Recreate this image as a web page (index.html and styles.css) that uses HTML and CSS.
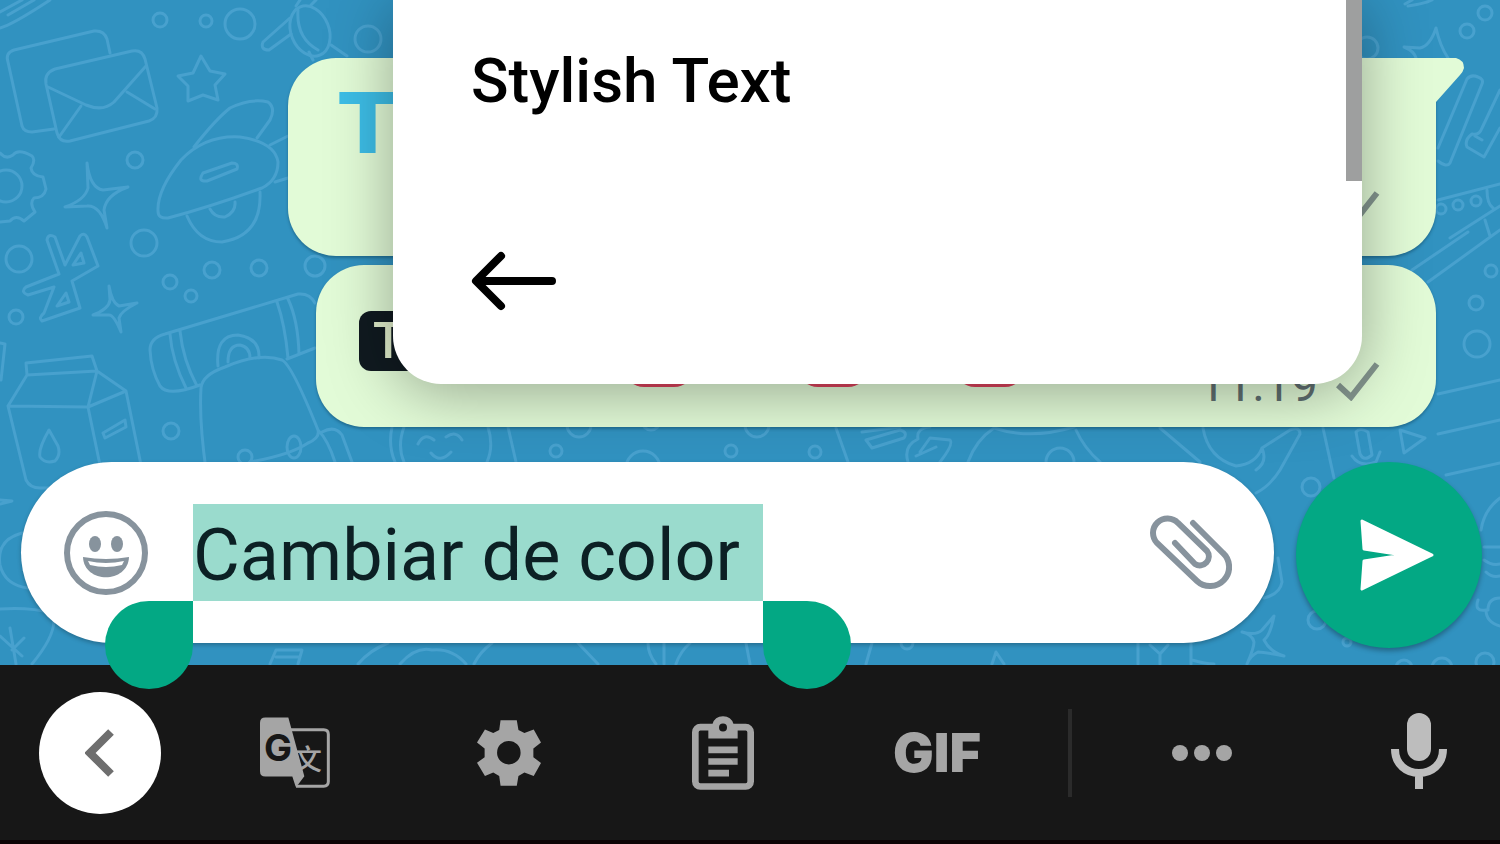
FILE: index.html
```html
<!DOCTYPE html>
<html lang="es">
<head>
<meta charset="utf-8">
<meta name="viewport" content="width=device-width, initial-scale=1">
<title>Stylish Text</title>
<link rel="stylesheet" href="styles.css">
</head>
<body>
<main class="chat">
  <svg class="wallpaper" viewBox="0 0 1500 665" preserveAspectRatio="xMinYMin slice" aria-hidden="true">
    <!-- envelopes, stars and dots -->
    <path d="M0 12L22 0M8 15L34 0M0 28Q12 25 50 0"/>
    <path d="M54 129L32 132Q24 132 22 126L8 62Q5 53 14 50L94 31Q104 30 107 39L110 53"/>
    <path d="M55 69L132 51Q142 49 145 59L157 108Q158 118 149 121L70 141Q60 143 57 133L46 84Q44 73 55 69Z"/>
    <path d="M48 87L86 105Q103 112 114 102L146 66M81 106L59 137M127 92L155 109"/>
    <path d="M201 56L210 71L225 74L215 85L218 100L203 95L188 101L188 86L178 76L193 73Z"/>
    <circle cx="160" cy="20" r="7"/><circle cx="206" cy="21" r="6"/><circle cx="240" cy="24" r="15"/><circle cx="368" cy="39" r="13"/><circle cx="135" cy="160" r="8"/>
    <path d="M87 163Q90 188 103 190L128 187Q106 195 104 210L107 228Q100 205 87 206L65 207Q85 200 88 188Z"/>
    <circle cx="6" cy="186" r="16"/>
    <path d="M0 153Q6 160 13 155Q18 148 32 156Q36 160 31 168Q32 176 43 177L46 189Q44 198 34 198Q29 203 35 212L24 221Q16 214 10 221L0 222"/>
    <!-- telescope -->
    <ellipse cx="310" cy="31" rx="19" ry="26" transform="rotate(-22 310 31)"/>
    <path d="M298 10Q296 38 318 50M290 18L263 42Q260 50 269 50L291 34M296 6L300 0M311 5L316 0M331 45L347 56M309 52L313 60"/>
    <!-- rocket -->
    <path d="M158 211Q157 190 181 160Q205 135 240 137Q275 142 278 162Q278 180 262 188Q210 207 168 218Q158 219 158 211Z"/>
    <path d="M194 147Q215 120 230 108Q250 98 268 102Q276 108 270 120L257 138M203 173L232 163Q239 163 237 169L207 181Q197 182 203 173ZM270 145L288 136M275 182L288 178"/>
    <path d="M187 216Q198 242 222 242Q262 236 260 192M210 209Q215 218 225 217Q236 212 235 202"/>
    <circle cx="19" cy="259" r="13"/><circle cx="144" cy="243" r="13"/><circle cx="170" cy="282" r="7"/><circle cx="212" cy="270" r="8"/><circle cx="259" cy="268" r="8"/><circle cx="191" cy="296" r="6"/><circle cx="315" cy="266" r="10"/><circle cx="16" cy="317" r="7"/><circle cx="171" cy="431" r="8"/>
    <path d="M47 240Q48 233 55 237L65 265L80 236Q84 232 87 237L98 266L72 281L80 308L42 321Q38 318 44 313L54 287L28 295Q20 292 26 287L59 274ZM73 265L81 253L84 263ZM57 306L66 293L69 302Z"/>
    <path d="M109 286Q112 303 119 306L137 303Q121 311 119 318L121 332Q114 315 109 315L93 315Q109 309 110 300Z"/>
    <!-- milk carton -->
    <path d="M97 371L27 375L26 363L92 356L97 371L88 407L8 406L27 375M8 406L26 480Q30 488 40 488H70M88 407L126 391L97 371M88 407L101 470M126 391L142 470M49 430Q38 449 40 457Q45 464 55 461Q61 455 58 446ZM103 433L125 420L126 427L105 438ZM0 343L5 344L1 380"/>
    <!-- backpack with bedroll -->
    <path d="M200 385Q168 397 160 386Q151 370 150 350Q150 338 165 334L298 294Q310 293 315 303M315 348L287 359M170 334Q172 360 186 388M180 331Q183 360 197 386M277 302Q285 325 288 358M288 299Q298 320 299 354"/>
    <path d="M218 366Q215 335 238 335Q260 338 259 358M228 362Q228 345 240 345Q250 347 250 358"/>
    <path d="M206 470Q199 420 201 388Q202 375 225 367Q260 352 282 360Q292 365 318 430Q320 438 308 443Q290 455 250 462M318 430Q328 440 335 462M322 432Q335 425 342 435L352 462"/>
    <circle cx="245" cy="457" r="7"/><ellipse cx="294" cy="447" rx="7" ry="11"/>
    <path d="M0 500L12 501L0 504M22 533Q-4 540 0 565Q5 585 28 588M0 609Q30 607 52 613Q60 630 32 664M10 628L16 664M0 636L22 656M24 638L12 650"/>
    <path d="M270 664L276 650H302L298 664M276 657H300M358 664Q370 650 388 643"/>
    <!-- strip between the messages and the composer -->
    <path d="M392 427Q388 446 395 462M404 462Q397 446 404 427M488 427Q494 446 487 462M418 444Q424 432 434 440M446 437Q456 430 462 440M431 453Q440 464 451 452M508 427L516 462"/>
    <circle cx="579" cy="425" r="12"/><circle cx="651" cy="421" r="9"/><circle cx="757" cy="425" r="12"/><circle cx="643" cy="468" r="17"/><circle cx="731" cy="451" r="6"/><circle cx="815" cy="452" r="6"/><circle cx="556" cy="451" r="6"/><circle cx="1060" cy="462" r="14"/>
    <path d="M836 428L848 462M862 432L900 427M866 440L900 430Q908 432 904 438L872 448ZM908 462Q903 446 918 439Q916 428 930 427M920 452L930 438L950 440Q954 444 940 462M916 456L936 447M968 462Q976 440 994 428Q1030 440 1074 427M1076 430Q1084 448 1100 462M1160 428L1200 462M1203 428Q1208 458 1236 466Q1256 464 1262 448L1290 430Q1300 426 1300 434L1280 470Q1270 486 1256 493M1262 448Q1268 462 1256 470M1323 428L1334 478"/>
    <!-- right-hand side -->
    <circle cx="1367" cy="48" r="11"/><circle cx="1467" cy="31" r="7"/><circle cx="1485" cy="13" r="7"/>
    <path d="M1405 4L1412 0M1408 6Q1424 4 1432 0M1436 28Q1440 46 1448 58M1436 28Q1430 46 1420 48L1404 47Q1414 51 1416 58"/>
    <path d="M1438 148L1467 79Q1471 74 1478 77Q1484 79 1482 84L1450 163Q1447 168 1438 161M1500 90L1482 128Q1479 136 1472 134Q1464 140 1467 147L1484 157L1500 128M1475 136L1482 140"/>
    <path d="M1438 200L1500 184M1487 190Q1487 204 1493 208M1450 238L1500 206M1485 220L1490 236M1412 270L1468 232M1428 282L1500 230"/>
    <circle cx="1441" cy="209" r="5"/><circle cx="1458" cy="205" r="5"/><circle cx="1476" cy="201" r="5"/>
    <circle cx="1491" cy="271" r="6"/><circle cx="1476" cy="303" r="7"/><circle cx="1477" cy="344" r="13"/>
    <path d="M1438 394L1500 380M1438 434L1500 420M1446 475L1500 463M1400 430L1425 438L1404 453ZM1356 432Q1360 427 1368 432L1372 455Q1364 462 1360 454ZM1352 456Q1360 468 1376 462L1380 452M1500 498Q1484 510 1481 530"/>
    <circle cx="1311" cy="487" r="9"/>
    <path d="M1278 558L1282 582Q1280 594 1264 598M1274 616Q1270 636 1264 640Q1270 652 1284 656Q1264 652 1258 652Q1250 656 1247 664Q1254 648 1254 642Q1252 634 1242 632Q1256 636 1262 630Z"/>
    <circle cx="1317" cy="620" r="9"/><circle cx="1347" cy="642" r="4"/><circle cx="1404" cy="668" r="8"/><circle cx="1442" cy="668" r="10"/><circle cx="1485" cy="662" r="9"/>
    <path d="M1484 547H1500M1484 560Q1492 566 1500 564M1486 572Q1492 578 1500 576M1478 600Q1474 612 1486 610Q1486 622 1500 626M1500 598Q1488 598 1488 610M1138 642V664M1150 645L1160 654L1168 645M1160 654V664M1191 644V664M1192 660Q1206 664 1214 664"/>
    <path d="M400 664Q416 646 432 650Q452 648 466 664M474 664Q480 652 492 643M578 643L598 664M648 643Q648 654 656 664M664 643V664M676 664Q680 652 690 643M746 643L750 664M872 643L866 664M992 664L996 652L1004 664"/>
    <circle cx="907" cy="643" r="6"/>
  </svg>

  <section class="messages" aria-label="Mensajes">
    <article class="bubble bubble-first">
      <svg class="tail" viewBox="0 0 28 46" aria-hidden="true"><path d="M0 0H20Q28 2 28 10Q27 14 24 17L0 44Z"/></svg>
      <p class="headline">T</p>
      <footer class="meta"><svg class="tick" viewBox="0 0 44 40" role="img" aria-label="Enviado"><path d="M2 24L15 36L41 3"/></svg></footer>
    </article>
    <article class="bubble bubble-second">
      <p class="label">T</p>
      <div class="dots"><span></span><span></span><span></span></div>
      <footer class="meta"><time>11:19</time><svg class="tick" viewBox="0 0 44 40" role="img" aria-label="Enviado"><path d="M2 24L15 36L41 3"/></svg></footer>
    </article>
  </section>

  <form class="composer">
    <div class="field">
      <button class="icon-button" type="button" aria-label="Emoji">
        <svg class="emoji" viewBox="63 510 86 86"><circle cx="106" cy="553" r="39" fill="none" stroke="#87939d" stroke-width="6"/><ellipse cx="95" cy="544" rx="6" ry="8"/><ellipse cx="117" cy="544" rx="6" ry="8"/><path d="M83 557Q106 561 129 557C128 584 84 584 83 557Z"/><path d="M88 561Q106 565 124 561L122 565Q106 569 90 565Z" fill="#fff"/></svg>
      </button>
      <div class="selection">
        <input class="entry" type="text" aria-label="Mensaje" value="Cambiar de color ">
        <span class="handle handle-start"></span>
        <span class="handle handle-end"></span>
      </div>
      <button class="icon-button attach" type="button" aria-label="Adjuntar">
        <svg class="clip" viewBox="1148 514 84 78"><path d="M1193 523L1223 553A18 18 0 0 1 1197 581L1157 543A14 14 0 0 1 1178 523L1207 551A9 9 0 0 1 1195 564L1175 543"/></svg>
      </button>
    </div>
    <button class="send" type="button" aria-label="Enviar">
      <svg viewBox="1360 518 76 74"><path d="M1363 521L1433 555L1363 589L1365 561L1404 555L1365 549Z"/></svg>
    </button>
  </form>

  <aside class="popup">
    <h1 class="popup-title">Stylish Text</h1>
    <button class="back" type="button" aria-label="Atrás">
      <svg viewBox="0 0 86 60"><path d="M81 30H6M30 5L5 30L30 55"/></svg>
    </button>
    <span class="scrollbar"></span>
  </aside>
</main>

<nav class="toolbar" aria-label="Teclado">
  <button class="collapse" type="button" aria-label="Contraer">
    <svg viewBox="0 0 30 48"><path d="M26 3L5 24L26 45"/></svg>
  </button>
  <button class="tool" type="button" aria-label="Traducir">
    <svg class="translate" viewBox="781 113 210 212"><path d="M797 114H866L914 290L896 314L888 322L878 291H797Q781 291 781 275V130Q781 114 797 114Z"/><path class="card" d="M870 151H972Q986 151 986 165V306Q986 320 972 320H889"/><text class="glyph-g" x="835" y="245" text-anchor="middle">G</text><text class="glyph-wen" x="924" y="270" text-anchor="middle">文</text></svg>
  </button>
  <button class="tool" type="button" aria-label="Ajustes">
    <svg class="gear" viewBox="231 121 193 197"><path fill-rule="evenodd" d="M302 121H351L356 150L374 159L402 149L424 188L401 206V232L424 250L402 289L374 278L356 289L351 318H302L298 289L280 278L255 289L231 249L254 232V206L231 188L255 149L280 159L298 150ZM327 183A35 35 0 1 0 327 254A35 35 0 1 0 327 183Z"/></svg>
  </button>
  <button class="tool" type="button" aria-label="Portapapeles">
    <svg class="clipboard" viewBox="876 108 186 221"><rect x="886" y="141" width="166" height="178" rx="15" fill="none" stroke="#a5a5a5" stroke-width="20"/><path d="M925 175V141L938 131Q944 108 969 108Q994 108 1000 131L1013 141V175ZM925 199H1013V219H925ZM925 234H1013V254H925ZM925 269H987V289H925Z"/><circle cx="969" cy="142" r="12" fill="#171717"/></svg>
  </button>
  <button class="tool gif" type="button">GIF</button>
  <span class="divider"></span>
  <button class="tool" type="button" aria-label="Más">
    <svg class="more" viewBox="0 0 60 16"><circle cx="8" cy="8" r="8"/><circle cx="30" cy="8" r="8"/><circle cx="52" cy="8" r="8"/></svg>
  </button>
  <button class="tool voice" type="button" aria-label="Voz">
    <svg class="mic" viewBox="0 0 56 80"><rect x="16" y="0" width="24" height="48" rx="12"/><path d="M4 36C4 68 52 68 52 36M28 60V76"/></svg>
  </button>
</nav>
</body>
</html>
```

FILE: styles.css
```css
* {
  box-sizing: border-box;
}

body {
  margin: 0;
  min-height: 100vh;
  display: flex;
  flex-direction: column;
  font-family: Roboto, "Liberation Sans", sans-serif;
  background: #171717;
  overflow-x: hidden;
}

button {
  border: 0;
  padding: 0;
  background: none;
  font: inherit;
  color: inherit;
}

svg {
  display: block;
}

p,
h1 {
  margin: 0;
}

.chat {
  position: relative;
  z-index: 1;
  flex: 1;
  display: flex;
  flex-direction: column;
  background: #3192c0;
}

.wallpaper {
  position: absolute;
  inset: 0;
  width: 100%;
  height: 100%;
  fill: none;
  stroke: #48a1ce;
  stroke-width: 3;
  stroke-linejoin: round;
  stroke-linecap: round;
}

.messages {
  position: relative;
  display: flex;
  flex-direction: column;
  gap: 9px;
  padding: 58px 64px 35px 288px;
}

.bubble {
  position: relative;
  display: flex;
  align-items: flex-start;
  border-radius: 48px;
  background: #e2fbd7;
  box-shadow: 0 2px 3px rgba(0, 40, 60, 0.35);
}

.bubble-first {
  min-height: 198px;
  padding: 14px 56px 18px 51px;
  border-top-right-radius: 0;
}

.bubble-second {
  min-height: 162px;
  margin-left: 28px;
  padding: 46px 56px 18px 43px;
}

.tail {
  position: absolute;
  top: 0;
  left: 100%;
  width: 28px;
  height: 46px;
  fill: #e2fbd7;
}

.headline {
  font-family: "DejaVu Sans", Roboto, sans-serif;
  font-size: 84px;
  line-height: 104px;
  font-weight: 700;
  color: #3dbde6;
}

.label {
  width: 80px;
  padding-left: 14px;
  border-radius: 12px;
  font-size: 50px;
  line-height: 60px;
  font-weight: 500;
  background: #101a20;
  color: #e0eecb;
}

.dots {
  display: flex;
  gap: 87px;
  margin-left: 185px;
}

.dots span {
  width: 70px;
  height: 76px;
  border-radius: 20px;
  background: #d9415a;
}

.dots span:first-child {
  margin-right: 17px;
}

.meta {
  display: flex;
  align-items: flex-end;
  align-self: flex-end;
  gap: 18px;
  margin-left: auto;
  font-size: 48px;
  line-height: 48px;
  color: #5f6f70;
}

.tick {
  width: 44px;
  height: 40px;
  margin-bottom: 8px;
  fill: none;
  stroke: #84968f;
  stroke-width: 6;
}

.popup {
  position: absolute;
  top: 0;
  left: 393px;
  right: 138px;
  padding: 46px 78px 73px;
  border-radius: 0 0 48px 48px;
  background: #fff;
  box-shadow: 0 8px 64px rgba(0, 0, 0, 0.34);
}

.popup-title {
  font-size: 62px;
  line-height: 70px;
  font-weight: 500;
  color: #000;
}

.back {
  display: block;
  margin-top: 135px;
}

.back svg {
  width: 86px;
  height: 60px;
  fill: none;
  stroke: #000;
  stroke-width: 8;
  stroke-linecap: round;
  stroke-linejoin: round;
}

.scrollbar {
  position: absolute;
  top: 0;
  right: 0;
  width: 16px;
  height: 181px;
  background: #9e9f9f;
}

.composer {
  position: relative;
  display: flex;
  align-items: flex-start;
  gap: 22px;
  padding: 0 18px 16px 21px;
}

.field {
  flex: 1;
  min-width: 0;
  display: flex;
  align-items: center;
  height: 181px;
  padding: 0 42px;
  border-radius: 91px;
  background: #fff;
  box-shadow: 0 2px 4px rgba(0, 0, 0, 0.25);
}

.icon-button {
  flex: none;
}

.emoji {
  width: 86px;
  height: 86px;
  fill: #87939d;
}

.selection {
  position: relative;
  margin-left: 44px;
}

.entry {
  display: block;
  width: 570px;
  height: 97px;
  padding: 6px 0 0 0;
  border: 0;
  outline: 0;
  font-family: Roboto, "Liberation Sans", sans-serif;
  font-size: 72px;
  background: #9adbcd;
  color: #0c2024;
}

.handle {
  position: absolute;
  top: 100%;
  width: 88px;
  height: 88px;
  background: #03a884;
}

.handle-start {
  right: 100%;
  border-radius: 50% 0 50% 50%;
}

.handle-end {
  left: 100%;
  border-radius: 0 50% 50% 50%;
}

.attach {
  margin-left: auto;
}

.clip {
  width: 84px;
  height: 78px;
  fill: none;
  stroke: #87939d;
  stroke-width: 6;
  stroke-linecap: round;
}

.send {
  flex: none;
  display: flex;
  align-items: center;
  justify-content: center;
  width: 186px;
  height: 186px;
  padding-left: 16px;
  border-radius: 50%;
  background: #03a884;
  box-shadow: 0 3px 5px rgba(0, 0, 0, 0.3);
}

.send svg {
  width: 76px;
  height: 74px;
  fill: #fff;
  stroke: #fff;
  stroke-width: 3;
  stroke-linejoin: round;
}

.toolbar {
  display: grid;
  grid-template-columns: 188fr repeat(4, 214fr) 52fr 212fr 192fr;
  align-items: center;
  justify-items: center;
  min-height: 179px;
  border-bottom: 4px solid #0d0406;
  background: #171717;
}

.collapse {
  justify-self: start;
  display: flex;
  align-items: center;
  justify-content: center;
  width: 122px;
  height: 122px;
  margin-left: 39px;
  border-radius: 50%;
  background: #fff;
}

.collapse svg {
  width: 30px;
  height: 48px;
  fill: none;
  stroke: #6e6e6e;
  stroke-width: 8;
}

.tool {
  color: #a5a5a5;
  fill: #a5a5a5;
}

.translate {
  width: 70px;
  height: 71px;
}

.card {
  fill: none;
  stroke: #a5a5a5;
  stroke-width: 9;
}

.glyph-g {
  font-family: Inter, Roboto, sans-serif;
  font-size: 112px;
  font-weight: 700;
  fill: #171717;
}

.glyph-wen {
  font-family: "Noto Sans CJK SC", sans-serif;
  font-size: 86px;
  font-weight: 500;
}

.gear {
  width: 64px;
  height: 66px;
}

.clipboard {
  width: 62px;
  height: 74px;
}

.gif {
  font-family: Inter, Roboto, sans-serif;
  font-size: 54px;
  line-height: 60px;
  font-weight: 900;
}

.divider {
  width: 4px;
  height: 88px;
  background: #2b2b2b;
}

.more {
  width: 60px;
  height: 16px;
}

.voice {
  justify-self: end;
  margin-right: 53px;
}

.mic {
  width: 56px;
  height: 80px;
  fill: #bdbdbd;
}

.mic path {
  fill: none;
  stroke: #bdbdbd;
  stroke-width: 8;
}
```
